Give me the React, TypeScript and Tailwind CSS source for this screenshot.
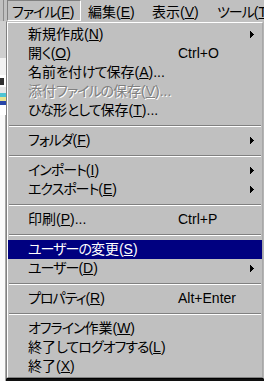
import React from "react";

type Row =
  | { sep: true }
  | {
      sep?: false;
      label: string;
      k: string;
      suffix?: string;
      shortcut?: string;
      arrow?: boolean;
      disabled?: boolean;
      active?: boolean;
    };

const rows: Row[] = [
  { label: "新規作成", k: "N", arrow: true },
  { label: "開く", k: "O", shortcut: "Ctrl+O" },
  { label: "名前を付けて保存", k: "A", suffix: "..." },
  { label: "添付ファイルの保存", k: "V", suffix: "...", disabled: true },
  { label: "ひな形として保存", k: "T", suffix: "..." },
  { sep: true },
  { label: "フォルダ", k: "F", arrow: true },
  { sep: true },
  { label: "インポート", k: "I", arrow: true },
  { label: "エクスポート", k: "E", arrow: true },
  { sep: true },
  { label: "印刷", k: "P", suffix: "...", shortcut: "Ctrl+P" },
  { sep: true },
  { label: "ユーザーの変更", k: "S", active: true },
  { label: "ユーザー", k: "D", arrow: true },
  { sep: true },
  { label: "プロパティ", k: "R", shortcut: "Alt+Enter" },
  { sep: true },
  { label: "オフライン作業", k: "W" },
  { label: "終了してログオフする", k: "L" },
  { label: "終了", k: "X" },
];

function Arrow() {
  return (
    <svg width="4" height="7" viewBox="0 0 4 7" className="ml-auto shrink-0" shapeRendering="crispEdges">
      <rect x="0" y="0" width="1" height="7" fill="currentColor" />
      <rect x="1" y="1" width="1" height="5" fill="currentColor" />
      <rect x="2" y="2" width="1" height="3" fill="currentColor" />
      <rect x="3" y="3" width="1" height="1" fill="currentColor" />
    </svg>
  );
}

function Txt({ s }: { s: string }) {
  const parts = s.match(/[\u3040-\u30ff]+|[^\u3040-\u30ff]+/g) || [];
  return (
    <>
      {parts.map((p, i) =>
        /[\u3040-\u30ff]/.test(p) ? (
          <span key={i} className="tracking-[-1px]">
            {p}
          </span>
        ) : (
          <React.Fragment key={i}>{p}</React.Fragment>
        )
      )}
    </>
  );
}

function Mn({ label, k, suffix }: { label: string; k: string; suffix?: string }) {
  return (
    <>
      <Txt s={label} />(<span className="underline decoration-1 underline-offset-[1px]">{k}</span>){suffix}
    </>
  );
}

export default function App() {
  return (
    <div className="w-[264px] h-[381px] overflow-hidden bg-[#c0c0c0] text-[14px] leading-none text-black font-['Liberation_Sans','Noto_Sans_CJK_JP',sans-serif] [font-feature-settings:'palt']">
      {/* menu bar */}
      <div className="flex h-[21px] pl-[3px] whitespace-nowrap">
        <div className="w-[4px] h-[21px] shrink-0 border-l border-l-[#8a8a8a]" />
        <div className="w-[74px] h-[21px] shrink-0 flex items-center border border-t-[#808080] border-l-[#808080] border-r-white border-b-white pt-[2px] pl-[4px]">
          <Mn label="ファイル" k="F" />
        </div>
        <div className="w-[71px] h-[21px] shrink-0 flex items-center pl-[7px] pt-[2px]">
          <Mn label="編集" k="E" />
        </div>
        <div className="w-[65px] h-[21px] shrink-0 flex items-center pt-[2px]">
          <Mn label="表示" k="V" />
        </div>
        <div className="h-[21px] shrink-0 flex items-center pt-[2px]">
          <Mn label="ツール" k="T" />
        </div>
      </div>

      <div className="flex">
        {/* window behind, left edge */}
        <div className="w-[6px] h-[360px] shrink-0 flex flex-col bg-white">
          <div className="h-[37px] bg-[#cfcfcf]" />
          <div className="h-[17px] bg-[#f2f2f2]" />
          <div className="h-[12px] flex items-center">
            <div className="w-[4px] h-[7px] bg-[#303030]" />
          </div>
          <div className="h-[6px] bg-[#e8e8e8]" />
          <div className="h-[4px] bg-[#4cc4d4]" />
          <div className="h-[4px] bg-[#e8e490]" />
          <div className="h-[4px] bg-[#2846a8]" />
          <div className="h-[10px] bg-white" />
          <div className="flex-1 border-r border-[#a8a8a8] bg-[#fafafa]" />
        </div>

        <div className="flex flex-col shrink-0">
          {/* dropdown */}
          <div className="w-[258px] border border-l-[#808080] border-t-[#c0c0c0] border-r-[#b4b4b4] border-b-black">
            <div className="border border-l-white border-t-white border-r-[#a8a8a8] border-b-[#808080] pt-[2px] pb-[1px] whitespace-nowrap">
              {rows.map((r, i) =>
                r.sep ? (
                  <div key={i} className="h-[11px] pt-[5px] px-[1px]">
                    <div className="h-[1px] bg-[#808080]" />
                    <div className="h-[1px] bg-white" />
                  </div>
                ) : (
                  <div
                    key={i}
                    className={
                      "flex items-center h-[19px] pl-[20px] pr-[8px] " +
                      (r.active
                        ? "bg-[#000080] text-white"
                        : r.disabled
                        ? "text-[#808080] [text-shadow:1px_1px_0_#ffffff]"
                        : "text-black")
                    }
                  >
                    <span className="w-[150px] shrink-0 pb-[2px]">
                      <Mn label={r.label} k={r.k} suffix={r.suffix} />
                    </span>
                    {r.shortcut && <span className="pb-[2px]">{r.shortcut}</span>}
                    {r.arrow && <Arrow />}
                  </div>
                )
              )}
            </div>
          </div>
          <div className="h-[2px] bg-[#101010]" />
        </div>
      </div>
    </div>
  );
}
